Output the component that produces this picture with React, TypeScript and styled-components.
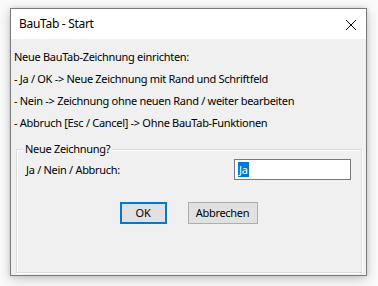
import React from "react";
import styled, { createGlobalStyle } from "styled-components";

const Global = createGlobalStyle`
  html, body { margin: 0; padding: 0; background: #ffffff; }
  body { font-family: "Noto Sans", "Open Sans", sans-serif; font-size: 11px; letter-spacing: -0.3px; color: #000; }
  * { box-sizing: border-box; }
`;

const Page = styled.div`
  width: 378px;
  height: 286px;
  padding: 8px 0 0 10px;
  background: #fbfbfb;
`;

const Window = styled.div`
  width: 357px;
  height: 268px;
  border: 1px solid #7a7a7a;
  background: #f0f0f0;
  box-shadow: 0 3px 12px rgba(0, 0, 0, 0.22), 0 0 4px rgba(0, 0, 0, 0.12);
  display: flex;
  flex-direction: column;
`;

const TitleBar = styled.div`
  height: 30px;
  background: #ffffff;
  display: flex;
  align-items: center;
  justify-content: space-between;
  padding: 0 9px 0 8px;
`;

const Title = styled.span`
  font-size: 12px;
  line-height: 16px;
`;

const Close = styled.span`
  width: 12px;
  height: 12px;
  display: flex;
  margin-right: 0px;
  margin-top: 1px;
`;

const Body = styled.div`
  flex: 1;
  display: flex;
  flex-direction: column;
  padding: 7px 4px 2px 3px;
`;

const Line = styled.div`
  line-height: 22px;
  height: 22px;
  white-space: nowrap;
`;

const GroupBox = styled.div`
  position: relative;
  margin: 15px 0 0 2px;
  flex: 1;
  border: 1px solid #dcdcdc;
  box-shadow: inset 1px 1px 0 #ffffff, 1px 1px 0 #ffffff;
  padding: 9px 10px 0 9px;
  display: flex;
  flex-direction: column;
`;

const Legend = styled.span`
  position: absolute;
  top: -9px;
  left: 6px;
  padding: 0 2px;
  background: #f0f0f0;
  line-height: 16px;
`;

const FieldRow = styled.div`
  display: flex;
  align-items: center;
  justify-content: space-between;
  height: 21px;
`;

const Label = styled.span`
  line-height: 16px;
`;

const TextBox = styled.div`
  width: 117px;
  height: 21px;
  border: 1px solid #7a7a7a;
  background: #ffffff;
  display: flex;
  align-items: center;
  padding-left: 3px;
`;

const Selected = styled.span`
  background: #0078d7;
  color: #ffffff;
  line-height: 15px;
  padding: 0 1px;
`;

const ButtonRow = styled.div`
  display: flex;
  justify-content: center;
  gap: 21px;
  margin-top: 22px;
`;

const Button = styled.button<{ $default?: boolean; $w: number }>`
  width: ${(p) => p.$w}px;
  height: 22px;
  font-family: inherit;
  font-size: 11px;
  letter-spacing: -0.3px;
  color: #000;
  background: #e1e1e1;
  border: 1px solid ${(p) => (p.$default ? "#0078d7" : "#adadad")};
  box-shadow: ${(p) => (p.$default ? "inset 0 0 0 1px #0078d7" : "none")};
  padding: 0;
  margin: 0;
  line-height: 16px;
`;

export default function App() {
  return (
    <>
      <Global />
      <Page>
        <Window>
          <TitleBar>
            <Title>BauTab - Start</Title>
            <Close>
              <svg width="12" height="12" viewBox="0 0 12 12">
                <path d="M1 1 L11 11 M11 1 L1 11" stroke="#000" strokeWidth="1" fill="none" />
              </svg>
            </Close>
          </TitleBar>
          <Body>
            <Line>Neue BauTab-Zeichnung einrichten:</Line>
            <Line>- Ja / OK -&gt; Neue Zeichnung mit Rand und Schriftfeld</Line>
            <Line>- Nein -&gt; Zeichnung ohne neuen Rand / weiter bearbeiten</Line>
            <Line>- Abbruch [Esc / Cancel] -&gt; Ohne BauTab-Funktionen</Line>
            <GroupBox>
              <Legend>Neue Zeichnung?</Legend>
              <FieldRow>
                <Label>Ja / Nein / Abbruch:</Label>
                <TextBox>
                  <Selected>Ja</Selected>
                </TextBox>
              </FieldRow>
              <ButtonRow>
                <Button $default $w={47}>OK</Button>
                <Button $w={70}>Abbrechen</Button>
              </ButtonRow>
            </GroupBox>
          </Body>
        </Window>
      </Page>
    </>
  );
}
